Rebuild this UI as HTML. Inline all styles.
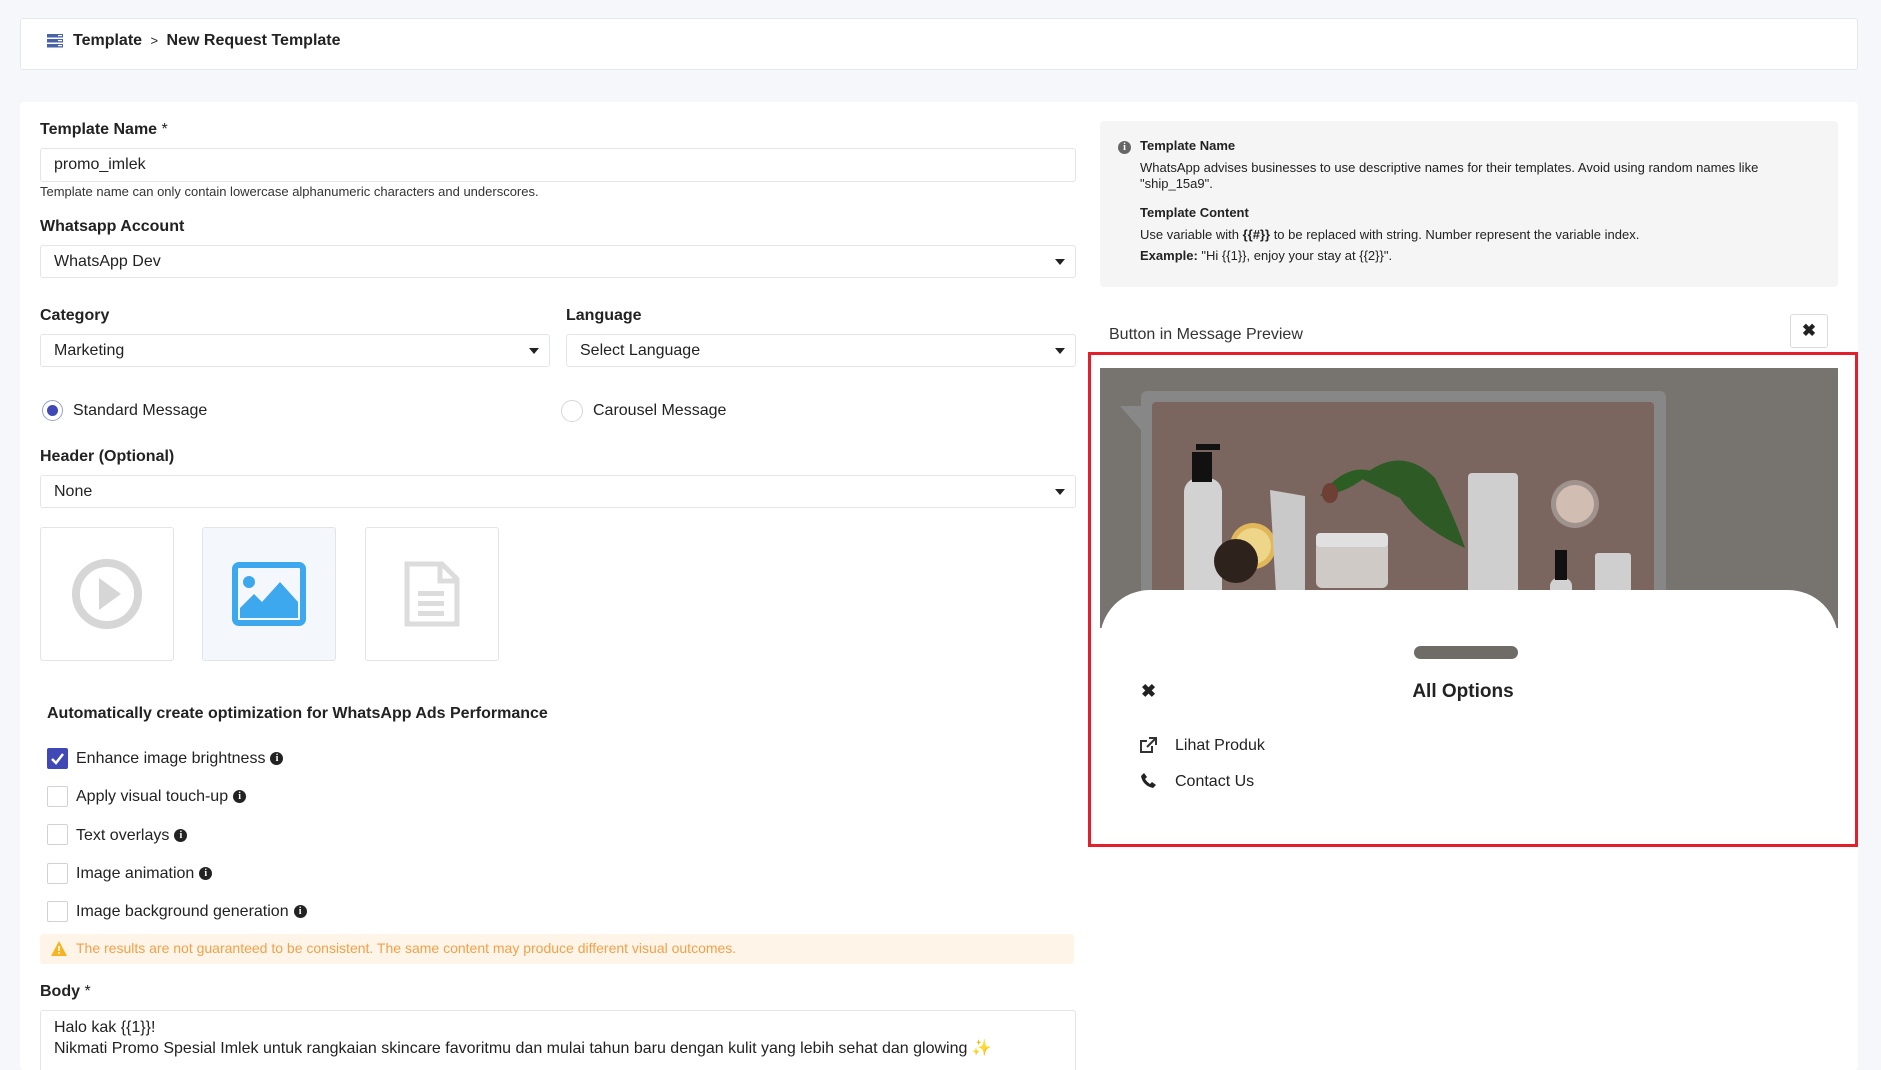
<!DOCTYPE html>
<html style="overflow:hidden;width:1881px;height:1070px"><head><meta charset="utf-8"><style>
*{box-sizing:border-box;margin:0;padding:0}
body{width:1881px;height:1070px;overflow:hidden;background:#f6f7fb;font-family:"Liberation Sans",Arial,sans-serif;color:#222;position:relative}
.a{position:absolute}
.lbl{position:absolute;font-size:16px;font-weight:bold;color:#222}
.inp{position:absolute;background:#fff;border:1px solid #e3e5ea;border-radius:3px;font-size:16px;color:#222;padding-left:13px;display:flex;align-items:center}
.caret{position:absolute;right:10px;top:50%;margin-top:-3px;width:0;height:0;border-left:5px solid transparent;border-right:5px solid transparent;border-top:6px solid #222}
.tile{position:absolute;top:527px;width:134px;height:134px;border:1px solid #e2e4e8;border-radius:3px;background:#fff;display:flex;align-items:center;justify-content:center}
.cb{position:absolute;left:47px;width:21px;height:21px;border:1px solid #cfd2d8;border-radius:2px;background:#fff}
.cbl{position:absolute;left:76px;font-size:16px;color:#222}
.ii{display:inline-block;width:13px;height:13px;border-radius:50%;background:#222;color:#fff;font-size:10px;font-weight:bold;text-align:center;line-height:13px;vertical-align:2px;margin-left:5px;font-family:"Liberation Serif",serif}
</style></head><body>
<div class="a" style="left:20px;top:18px;width:1838px;height:52px;background:#fff;border:1px solid #e6e8ee;border-radius:3px"></div>
<svg class="a" style="left:47px;top:34px" width="16" height="14" viewBox="0 0 16 14"><rect x="0" y="0" width="16" height="3.5" fill="#4a63a8"/><rect x="0" y="5" width="16" height="3.5" fill="#4a63a8"/><rect x="0" y="10" width="16" height="3.5" fill="#4a63a8"/><rect x="11" y="1" width="4" height="1.2" fill="#fff"/><rect x="11" y="6" width="4" height="1.2" fill="#fff"/><rect x="11" y="11" width="4" height="1.2" fill="#fff"/></svg>
<div class="a" style="left:73px;top:32px;font-size:16px;font-weight:bold;color:#222">Template <span style="font-weight:normal;font-size:13px;margin:0 4px">&gt;</span> New Request Template</div>

<div class="a" style="left:20px;top:102px;width:1838px;height:968px;background:#fff;border-radius:4px"></div>

<div class="lbl" style="left:40px;top:121px">Template Name <span style="font-weight:normal">*</span></div>
<div class="inp" style="left:40px;top:148px;width:1036px;height:34px">promo_imlek</div>
<div class="a" style="left:40px;top:184px;font-size:13px;color:#333">Template name can only contain lowercase alphanumeric characters and underscores.</div>
<div class="lbl" style="left:40px;top:218px">Whatsapp Account</div>
<div class="inp" style="left:40px;top:245px;width:1036px;height:33px">WhatsApp Dev<span class="caret"></span></div>
<div class="lbl" style="left:40px;top:307px">Category</div>
<div class="lbl" style="left:566px;top:307px">Language</div>
<div class="inp" style="left:40px;top:334px;width:510px;height:33px">Marketing<span class="caret"></span></div>
<div class="inp" style="left:566px;top:334px;width:510px;height:33px">Select Language<span class="caret"></span></div>
<div class="a" style="left:42px;top:400px;width:21px;height:21px;border-radius:50%;border:1px solid #9aa0c8;background:#fff"><div style="margin:4px;width:11px;height:11px;border-radius:50%;background:#3f48b5"></div></div>
<div class="a" style="left:73px;top:402px;font-size:16px">Standard Message</div>
<div class="a" style="left:561px;top:400px;width:22px;height:22px;border-radius:50%;border:1px solid #d4d6dc;background:#fff"></div>
<div class="a" style="left:593px;top:402px;font-size:16px">Carousel Message</div>
<div class="lbl" style="left:40px;top:448px">Header (Optional)</div>
<div class="inp" style="left:40px;top:475px;width:1036px;height:33px">None<span class="caret"></span></div>

<div class="tile" style="left:40px"><svg width="72" height="72" viewBox="0 0 72 72"><circle cx="36" cy="36" r="31" fill="none" stroke="#d6d6d6" stroke-width="8"/><path d="M28 20 L50 36 L28 52 Z" fill="#d6d6d6"/></svg></div>
<div class="tile" style="left:202px;background:#f4f7fb"><svg width="74" height="64" viewBox="0 0 74 64"><rect x="3" y="3" width="68" height="58" rx="4" fill="none" stroke="#3ea8ee" stroke-width="6"/><circle cx="17" cy="20" r="6" fill="#3ea8ee"/><path d="M8 56 L8 46 L22 32 L30 40 L48 20 L66 40 L66 56 Z" fill="#3ea8ee"/></svg></div>
<div class="tile" style="left:365px"><svg width="56" height="66" viewBox="0 0 56 66"><path d="M3 3 H38 L53 18 V63 H3 Z" fill="none" stroke="#dcdcdc" stroke-width="5"/><path d="M36 3 V20 H53" fill="none" stroke="#dcdcdc" stroke-width="5"/><rect x="14" y="30" width="26" height="5" fill="#dcdcdc"/><rect x="14" y="40" width="26" height="5" fill="#dcdcdc"/><rect x="14" y="50" width="26" height="5" fill="#dcdcdc"/></svg></div>

<div class="a" style="left:47px;top:705px;font-size:16px;font-weight:bold">Automatically create optimization for WhatsApp Ads Performance</div>
<div class="cb" style="top:748px;background:#3f48b5;border-color:#3f48b5"><svg width="19" height="19" viewBox="0 0 19 19"><path d="M4 10 L8 14 L15 5" fill="none" stroke="#fff" stroke-width="2.5"/></svg></div>
<div class="cbl" style="top:750px">Enhance image brightness<span class="ii">i</span></div>
<div class="cb" style="top:786px"></div><div class="cbl" style="top:788px">Apply visual touch-up<span class="ii">i</span></div>
<div class="cb" style="top:824px"></div><div class="cbl" style="top:827px">Text overlays<span class="ii">i</span></div>
<div class="cb" style="top:863px"></div><div class="cbl" style="top:865px">Image animation<span class="ii">i</span></div>
<div class="cb" style="top:901px"></div><div class="cbl" style="top:903px">Image background generation<span class="ii">i</span></div>
<div class="a" style="left:40px;top:934px;width:1034px;height:30px;background:#fff4e8;border-radius:3px"></div>
<svg class="a" style="left:51px;top:941px" width="16" height="15" viewBox="0 0 16 15"><path d="M8 0 L16 15 H0 Z" fill="#f5b520"/><rect x="7.2" y="5" width="1.6" height="5" fill="#fff"/><rect x="7.2" y="11.3" width="1.6" height="1.6" fill="#fff"/></svg>
<div class="a" style="left:76px;top:940px;font-size:14px;color:#f0a24a">The results are not guaranteed to be consistent. The same content may produce different visual outcomes.</div>
<div class="lbl" style="left:40px;top:983px">Body <span style="font-weight:normal">*</span></div>
<div class="a" style="left:40px;top:1010px;width:1036px;height:70px;border:1px solid #e3e5ea;border-radius:3px;background:#fff;padding:6px 13px;font-size:16px;line-height:21px">Halo kak {{1}}!<br>Nikmati Promo Spesial Imlek untuk rangkaian skincare favoritmu dan mulai tahun baru dengan kulit yang lebih sehat dan glowing <span style="color:#f5b520">✨</span></div>

<!-- right -->
<div class="a" style="left:1100px;top:121px;width:738px;height:166px;background:#f5f5f5;border-radius:4px"></div>
<div class="a" style="left:1118px;top:141px;width:13px;height:13px;border-radius:50%;background:#666;color:#fff;font-size:10px;font-weight:bold;text-align:center;line-height:13px;font-family:'Liberation Serif',serif">i</div>
<div class="a" style="left:1140px;top:138px;font-size:13px;line-height:16px;color:#222;width:680px">
<b>Template Name</b><div style="margin-top:6px">WhatsApp advises businesses to use descriptive names for their templates. Avoid using random names like<br>"ship_15a9".</div>
<b style="display:block;margin-top:13px">Template Content</b><div style="margin-top:6px">Use variable with <b>{{#}}</b> to be replaced with string. Number represent the variable index.</div><div style="margin-top:5px"><b>Example:</b> "Hi {{1}}, enjoy your stay at {{2}}".</div></div>
<div class="a" style="left:1109px;top:326px;font-size:16px;color:#333">Button in Message Preview</div>
<div class="a" style="left:1790px;top:314px;width:38px;height:34px;border:1px solid #dcdcdc;border-radius:3px;background:#fff;text-align:center;line-height:32px;font-size:17px;font-weight:bold">✖</div>

<div class="a" style="left:1088px;top:352px;width:770px;height:495px;border:3px solid #e21f2a;background:#fff"></div>
<div class="a" style="left:1100px;top:368px;width:738px;height:260px;background:#77736f;overflow:hidden">
<svg width="738" height="260" viewBox="0 0 738 260">
<path d="M20 38 H48 V70 Z" fill="#888"/>
<rect x="41" y="23" width="525" height="240" rx="6" fill="#878787"/>
<rect x="52" y="34" width="502" height="230" rx="4" fill="#7b665f"/>
<rect x="84" y="110" width="38" height="150" rx="14" fill="#d2d2d2"/><rect x="92" y="84" width="20" height="30" fill="#111"/><rect x="96" y="76" width="24" height="6" fill="#111"/>
<circle cx="153" cy="178" r="23" fill="#e1b75a"/><circle cx="153" cy="178" r="18" fill="#edd58a"/>
<circle cx="136" cy="193" r="22" fill="#2e221d"/>
<path d="M170 122 L205 128 L205 260 L178 260 Z" fill="#c9c9c9"/>
<path d="M220 128 Q245 95 272 103 Q250 125 220 128Z" fill="#2c5d22"/>
<path d="M260 110 Q300 75 335 110 Q355 150 365 180 Q320 160 300 130Z" fill="#2d5a25"/>
<ellipse cx="230" cy="125" rx="8" ry="10" fill="#6e3f35"/>
<rect x="216" y="165" width="72" height="55" rx="6" fill="#cfcac6"/><rect x="216" y="165" width="72" height="14" rx="4" fill="#e0e0e0"/>
<rect x="368" y="105" width="50" height="160" rx="4" fill="#cfcfcf"/>
<circle cx="475" cy="136" r="24" fill="#a0938d"/><circle cx="475" cy="136" r="19" fill="#d2bdb2"/>
<rect x="450" y="210" width="22" height="55" rx="8" fill="#d2d2d2"/><rect x="455" y="182" width="12" height="30" fill="#111"/>
<rect x="495" y="185" width="36" height="80" rx="3" fill="#cfcfcf"/>
</svg></div>
<div class="a" style="left:1100px;top:590px;width:738px;height:250px;background:#fff;border-radius:50px 50px 0 0"></div>
<div class="a" style="left:1414px;top:646px;width:104px;height:13px;border-radius:7px;background:#6f6b67"></div>
<div class="a" style="left:1141px;top:681px;font-size:18px;font-weight:bold;color:#222">✖</div>
<div class="a" style="left:1400px;top:681px;width:126px;text-align:center;font-size:19px;font-weight:bold;color:#222">All Options</div>
<svg class="a" style="left:1139px;top:737px" width="18" height="17" viewBox="0 0 18 17"><path d="M13 9 V15 H2 V4 H8" fill="none" stroke="#333" stroke-width="2"/><path d="M10 1 H17 V8" fill="none" stroke="#333" stroke-width="2"/><path d="M17 1 L8 10" stroke="#333" stroke-width="2"/></svg>
<div class="a" style="left:1175px;top:737px;font-size:16px;color:#222">Lihat Produk</div>
<svg class="a" style="left:1141px;top:773px" width="15" height="15" viewBox="0 0 15 15"><path d="M3 0 L6 4 L4 6 Q6 9 9 11 L11 9 L15 12 L12 15 Q2 13 0 3 Z" fill="#222"/></svg>
<div class="a" style="left:1175px;top:773px;font-size:16px;color:#222">Contact Us</div>
</body></html>
